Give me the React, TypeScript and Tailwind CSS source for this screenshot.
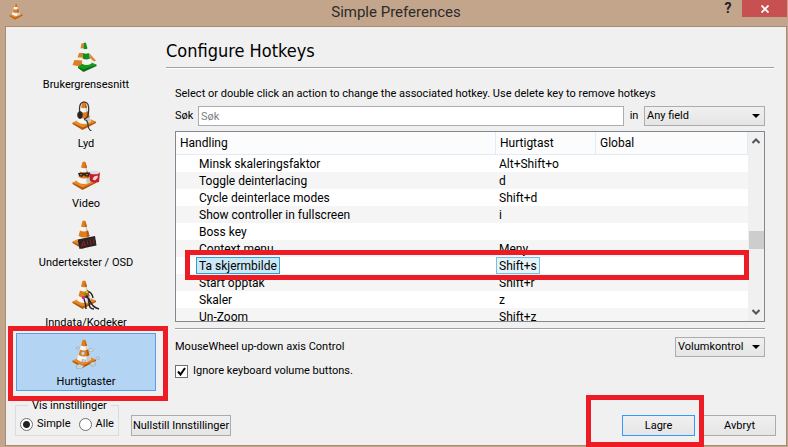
import type { ReactNode } from "react";

type IconKind = "interface" | "audio" | "video" | "subtitles" | "codecs" | "hotkeys" | "plain";

const categories: { label: string; icon: IconKind }[] = [
  { label: "Brukergrensesnitt", icon: "interface" },
  { label: "Lyd", icon: "audio" },
  { label: "Video", icon: "video" },
  { label: "Undertekster / OSD", icon: "subtitles" },
  { label: "Inndata/Kodeker", icon: "codecs" },
  { label: "Hurtigtaster", icon: "hotkeys" },
];

const hotkeys: { action: string; keys: string; selected?: boolean }[] = [
  { action: "Minsk skaleringsfaktor", keys: "Alt+Shift+o" },
  { action: "Toggle deinterlacing", keys: "d" },
  { action: "Cycle deinterlace modes", keys: "Shift+d" },
  { action: "Show controller in fullscreen", keys: "i" },
  { action: "Boss key", keys: "" },
  { action: "Context menu", keys: "Meny" },
  { action: "Ta skjermbilde", keys: "Shift+s", selected: true },
  { action: "Start opptak", keys: "Shift+r" },
  { action: "Skaler", keys: "z" },
  { action: "Un-Zoom", keys: "Shift+z" },
];

function Cone({ base, stripe, edge }: { base: string; stripe: string; edge: string }) {
  return (
    <g>
      <path d="M0.500 21.500 L13 16 L24 20.500 L10.500 28 Z" fill={base} />
      <path d="M0.500 21.500 L10.500 26.500 L24 20.500 L24 22 L10.500 29 L0.500 23 Z" fill={edge} />
      <path d="M10.500 1 Q12 0 13.500 1 L19 20.500 Q12 25.500 5 20.500 Z" fill="#f6f6f6" />
      <path d="M13.500 3 L19 20.500 Q17.500 22 14.500 22.800 Z" fill="#c9c9cc" />
      <path d="M10.500 1 Q12 0 13.500 1 L15 6.500 Q12 8 9 6.500 Z" fill={stripe} />
      <path d="M8 10.500 Q12 12.500 16 10.500 L17.500 16 Q12 19 6.500 16 Z" fill={stripe} />
      <path d="M13 1 L15 6.500 L13.500 7.200 Z M14.500 11.200 L16 10.500 L17.500 16 L15.200 17.200 Z" fill={edge} />
    </g>
  );
}

function ConeIcon({ kind, className }: { kind: IconKind; className: string }) {
  return (
    <svg viewBox="0 0 28 30" className={className} aria-hidden="true">
      {kind === "interface" && (
        <g>
          <path d="M9.500 2 L12 1.500 L14 23 L3 24 Z" fill="#f3f3f3" />
          <path d="M9.500 1.500 L12 1 L12.500 6 L8.500 6.500 Z M7 11 L13 11 L13 15.500 L5.500 15.500 Z M2.500 18 L11 18.500 L10 25 L0.500 23 Z" fill="#e07c25" />
          <path d="M17 11 L24 18.500 L22 19.500 L16.500 15 Z" fill="#e0873a" />
          <path d="M6 24.500 L15 19 L24.500 22.500 L11.500 28.500 Z" fill="#169a1c" />
          <path d="M6 24.500 L11.500 27.500 L24.500 22.500 L24.500 24 L11.500 30 L6 26 Z" fill="#087010" />
          <path d="M12 1 Q13 0 14 1 L19.500 21.500 Q14 24.500 10 21.500 Z" fill="#f4f4f4" />
          <path d="M12 1 Q13 0 14 1 L15.500 6.500 Q13 8 11.300 6.500 Z M11 11 Q14 12.500 16.600 11 L18 16.500 Q14 18.500 10.500 16.500 Z" fill="#129019" />
        </g>
      )}
      {kind !== "interface" && <Cone base="#e58a25" stripe="#df7c1c" edge="#b3590d" />}
      {kind === "audio" && (
        <g fill="none" stroke="#333">
          <path d="M8 14 Q6 1 12 1 Q18 1 16.500 12 Q16 17 12 18" strokeWidth="1.200" />
          <ellipse cx="8" cy="14" rx="2.300" ry="3.500" fill="#222" />
          <path d="M12 18.500 Q16 19 16 24 T21 31" strokeWidth="1.200" />
        </g>
      )}
      {kind === "video" && (
        <g>
          <path d="M17 11.500 L28 11.500 L27 21 Q22 23 18 20 Z" fill="#c71c2a" />
          <ellipse cx="22.500" cy="11.500" rx="5" ry="1.800" fill="#d9dde4" />
          <path d="M20.500 18.500 L22 15.500 L26 14.500 L25.500 17 L23 19.500 Z" fill="#f3d5d8" />
          <path d="M6 12 L18 11.500 L17 15.500 L13 15.500 L12 14 L10 16 L7 15 Z" fill="#2a2520" />
          <path d="M8 13.700 H10 M14 13.700 H16" stroke="#c98022" />
        </g>
      )}
      {kind === "subtitles" && (
        <g>
          <path d="M5.500 19.500 L23 16 L24.500 25.500 L7.500 29 Z" fill="#282424" />
          <path d="M9.500 27 L11.500 21 L13.500 26 M10 25 H13 M15 20.500 L16 25 M18 19.500 L19 24.500 M21 19 L22 23.500" stroke="#9e1d26" fill="none" />
        </g>
      )}
      {kind === "codecs" && (
        <g fill="none">
          <path d="M10 18 Q16 15 18 21 T27 29 M13 14 Q17 17 17 23 T22 29 M15 11 Q20 12 21 18 M12 19 Q14 24 14 29" stroke="#26212a" strokeWidth="1.400" />
          <path d="M10 17.500 H13" stroke="#e12883" strokeWidth="3" />
          <path d="M13 15 L15 13" stroke="#4c9b1d" strokeWidth="2.500" />
          <path d="M14 11.500 L16 12.500" stroke="#f0c800" strokeWidth="2" />
        </g>
      )}
      {kind === "hotkeys" && (
        <g stroke="#8f9397" strokeWidth="0.500">
          <path d="M4 8.500 L7 8 L7.500 9.500 L5 10.500 Z M16.500 10.500 L20 9.500 L21.500 11.500 L18 13 Z M9 13.500 L12 12.500 L13 15 L10 16.500 Z M24 18.500 L27 18 L27.500 20 L25 20.500 Z" fill="#dfe1e3" />
          <path d="M4 27 L7 25 L12 27 L9 30 L5 29.500 Z M18 24 L22 22.500 L24 25.500 L20 27.500 Z M10 20.500 L14 21 L13 23.500 L10 23 Z" fill="#d0d3d5" />
        </g>
      )}
    </svg>
  );
}

function Highlight({ className }: { className: string }) {
  return <div aria-hidden="true" className={`pointer-events-none absolute z-10 border-[5px] border-[#ed1c24] ${className}`} />;
}

function Dropdown({ id, label, options, className }: { id: string; label: string; options: string[]; className: string }) {
  return (
    <div className={`relative ${className}`}>
      <select
        id={id}
        aria-label={label}
        className="block h-5 w-full appearance-none border border-[#acacac] bg-linear-to-b from-[#f0f0f0] to-[#e5e5e5] pl-0.5 pr-5"
      >
        {options.map((o) => (
          <option key={o}>{o}</option>
        ))}
      </select>
      <svg viewBox="0 0 8 4" className="pointer-events-none absolute right-[5px] top-2 h-1 w-2" aria-hidden="true">
        <path d="M0 0 H8 L4 4 Z" fill="#000" />
      </svg>
    </div>
  );
}

function PushButton({ children, className }: { children: ReactNode; className: string }) {
  return (
    <button
      type="button"
      className={`h-[21px] whitespace-nowrap border bg-linear-to-b from-[#f0f0f0] to-[#e5e5e5] ${className}`}
    >
      {children}
    </button>
  );
}

function Chevron({ d }: { d: string }) {
  return (
    <svg viewBox="0 0 8 6" className="h-1.5 w-2" aria-hidden="true">
      <path d={d} fill="none" stroke="#555" strokeWidth="2" />
    </svg>
  );
}

function TitleBar() {
  return (
    <header className="relative flex h-[26px] items-start justify-end">
      <ConeIcon kind="plain" className="absolute left-1 top-[3px] h-[17px] w-4" />
      <h1 className="absolute inset-x-0 top-0 text-center text-[15px] leading-6 text-[#2b2b2b]">Simple Preferences</h1>
      <button type="button" aria-label="Help" className="relative mr-1.5 w-4 text-sm font-bold leading-4 text-[#222]">
        ?
      </button>
      <button type="button" aria-label="Close" className="relative flex h-[17px] w-[45px] items-center justify-center bg-[#c75050]">
        <svg viewBox="0 0 8 8" className="h-2 w-2" aria-hidden="true">
          <path d="M0.500 0.500 L7.500 7.500 M7.500 0.500 L0.500 7.500" stroke="#fff" strokeWidth="1.800" />
        </svg>
      </button>
    </header>
  );
}

function Sidebar() {
  return (
    <nav className="flex h-[355px] flex-col justify-between">
      {categories.map(({ label, icon }) => {
        const active = icon === "hotkeys";
        return (
          <div key={label} className="relative">
            <button
              type="button"
              className={`flex h-[58px] w-full flex-col items-center border pt-[5px] ${active ? "border-[#5a9fe3] bg-[#b3d4f3]" : "border-transparent"}`}
            >
              <ConeIcon kind={icon} className="h-[30px] w-7" />
              <span className="mt-[5px] leading-4">{label}</span>
            </button>
            {active && <Highlight className="-bottom-2.5 -left-2 -right-3 -top-[7px]" />}
          </div>
        );
      })}
    </nav>
  );
}

function HotkeyTable() {
  return (
    <div className="relative mt-[5px]">
      <div className="flex h-[191px] overflow-hidden border border-[#828790] bg-white">
        <div className="min-w-0 flex-1 overflow-hidden">
          <table className="w-full table-fixed border-separate border-spacing-0 text-left text-xs">
            <colgroup>
              <col />
              <col className="w-[100px]" />
              <col className="w-[152px]" />
            </colgroup>
            <thead>
              <tr className="h-[23px] bg-[#fcfcfc]">
                {["Handling", "Hurtigtast", "Global"].map((h) => (
                  <th key={h} className="border-b border-r border-[#e0ebfa] px-1 py-0 font-normal leading-[22px]">
                    {h}
                  </th>
                ))}
              </tr>
            </thead>
            <tbody>
              {hotkeys.map(({ action, keys, selected }) => (
                <tr key={action} className="h-[17px] even:bg-[#f5f5f5]">
                  <td className="p-0 pl-5">
                    <span className={`inline-block h-[17px] border px-0.5 align-top leading-[17px] ${selected ? "border-[#26a0da] bg-[#cbe8f6]" : "border-transparent"}`}>
                      {action}
                    </span>
                  </td>
                  <td className="p-0">
                    <span className={`inline-block h-[17px] border px-0.5 align-top leading-[17px] ${selected ? "border-[#70c0e7] bg-[#e5f3fb]" : "border-transparent"}`}>
                      {keys}
                    </span>
                  </td>
                  <td className="p-0" />
                </tr>
              ))}
            </tbody>
          </table>
        </div>
        <div className="flex w-4 flex-col items-center justify-between bg-[#f0f0f0] py-1.5">
          <Chevron d="M0.500 5 L4 1.500 L7.500 5" />
          <div className="mt-[26px] h-[18px] w-[15px] bg-[#cdcdcd]" />
          <Chevron d="M0.500 1 L4 4.500 L7.500 1" />
        </div>
      </div>
      <Highlight className="left-2.5 right-4 top-[119px] h-[30px]" />
    </div>
  );
}

export default function App() {
  return (
    <div className="min-h-screen bg-[#c3a58b] pb-px pl-[5px] pr-px font-['Roboto',sans-serif] text-[11px] leading-4 text-black">
      <TitleBar />
      <div className="border border-[#a98a72] bg-[#f0f0f0] pb-[9px]">
        <div className="flex">
          <div className="w-[160px] shrink-0 pl-2.5 pr-2.5 pt-[9px]">
            <Sidebar />
          </div>
          <main className="min-w-0 flex-1 pr-3 pt-2.5">
            <h2 className="h-[31px] border-b border-[#a0a0a0] font-['DejaVu_Sans_Condensed','DejaVu_Sans',sans-serif] text-lg leading-7">
              Configure Hotkeys
            </h2>
            <div className="border-t border-white pl-[9px] pr-[9px] pt-[17px]">
              <p className="whitespace-nowrap">
                Select or double click an action to change the associated hotkey. Use delete key to remove hotkeys
              </p>
              <div className="mt-1 flex items-center">
                <label htmlFor="search" className="w-[23px]">Søk</label>
                <input
                  id="search"
                  type="text"
                  placeholder="Søk"
                  className="h-5 min-w-0 flex-1 border border-[#abadb3] bg-white px-0.5 placeholder:text-[#808080]"
                />
                <label htmlFor="field" className="w-5 text-center">in</label>
                <Dropdown id="field" label="Any field" options={["Any field", "Handling", "Hurtigtast"]} className="w-[121px]" />
              </div>
              <HotkeyTable />
              <hr className="mt-1.5 border-t border-[#a0a0a0] shadow-[0_1px_0_#fff]" />
              <div className="mt-2 flex items-center justify-between">
                <label htmlFor="wheel">MouseWheel up-down axis Control</label>
                <Dropdown id="wheel" label="MouseWheel up-down axis Control" options={["Volumkontroll"]} className="w-[90px]" />
              </div>
              <label className="mt-1.5 flex items-center gap-[5px]">
                <span className="relative flex h-[13px] w-[13px]">
                  <input type="checkbox" defaultChecked className="peer h-[13px] w-[13px] appearance-none border border-[#707070] bg-white" />
                  <svg viewBox="0 0 13 13" className="pointer-events-none absolute inset-0 hidden h-[13px] w-[13px] peer-checked:block" aria-hidden="true">
                    <path d="M3 6.500 L5.500 9.500 L10 3" fill="none" stroke="#000" strokeWidth="2" />
                  </svg>
                </span>
                Ignore keyboard volume buttons.
              </label>
            </div>
          </main>
        </div>
        <footer className="flex items-end pl-[9px] pr-2.5 pt-[5px]">
          <fieldset className="h-10 w-[104px] border border-[#dcdcdc] pl-1">
            <legend className="ml-2 px-1 pt-0.5 leading-4">Vis innstillinger</legend>
            <div className="mt-0.5 flex items-center gap-2">
              {["Simple", "Alle"].map((name, i) => (
                <label key={name} className="flex items-center gap-1">
                  <input
                    type="radio"
                    name="view"
                    defaultChecked={i === 0}
                    className="h-[13px] w-[13px] appearance-none rounded-full border border-[#707070] bg-white checked:bg-[radial-gradient(circle,#222_0_3px,#fff_4px)]"
                  />
                  {name}
                </label>
              ))}
            </div>
          </fieldset>
          <PushButton className="ml-3 w-[100px] border-[#acacac]">Nullstill Innstillinger</PushButton>
          <div className="relative ml-auto mr-2">
            <PushButton className="w-[73px] border-[#3399ff]">Lagre</PushButton>
            <Highlight className="-bottom-[11px] -left-9 -right-[9px] -top-5" />
          </div>
          <PushButton className="w-[73px] border-[#acacac]">Avbryt</PushButton>
        </footer>
      </div>
    </div>
  );
}
